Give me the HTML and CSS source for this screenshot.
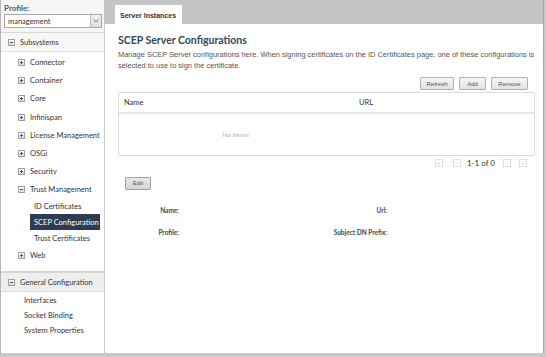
FILE: index.html
```html
<!DOCTYPE html>
<html lang="en">
<head>
  <meta charset="UTF-8">
  <title>SCEP Server Configurations</title>
  <link rel="stylesheet" href="styles.css">
</head>
<body>
  <div class="app">
    <div class="sidebar">
      <div class="profile">
        <div class="profile-label">Profile:</div>
        <div class="select">
          <span>management</span>
          <span class="select-btn">
            <svg width="6" height="4" viewBox="0 0 6 4"><path d="M0.5 0.5 L3 3 L5.5 0.5" fill="none" stroke="#777" stroke-width="1"/></svg>
          </span>
        </div>
      </div>

      <div class="section-head"><span class="icon minus"></span>Subsystems</div>
      <ul class="nav">
        <li><span class="icon"></span>Connector</li>
        <li><span class="icon"></span>Container</li>
        <li><span class="icon"></span>Core</li>
        <li><span class="icon"></span>Infinispan</li>
        <li><span class="icon"></span>License Management</li>
        <li><span class="icon"></span>OSGi</li>
        <li><span class="icon"></span>Security</li>
        <li class="open"><span class="icon minus"></span>Trust Management</li>
        <li class="sub">ID Certificates</li>
        <li class="sub selected">SCEP Configuration</li>
        <li class="sub">Trust Certificates</li>
        <li class="web"><span class="icon"></span>Web</li>
      </ul>

      <div class="section-head general"><span class="icon minus"></span>General Configuration</div>
      <ul class="nav plain">
        <li>Interfaces</li>
        <li>Socket Binding</li>
        <li>System Properties</li>
      </ul>
    </div>

    <div class="main">
      <div class="tabbar">
        <div class="tab">Server Instances</div>
      </div>

      <div class="content">
        <h2>SCEP Server Configurations</h2>
        <p class="desc">Manage SCEP Server configurations here. When signing certificates on the ID Certificates page, one of these configurations is selected to use to sign the certificate.</p>

        <div class="toolbar">
          <button class="btn btn-refresh">Refresh</button>
          <button class="btn btn-add">Add</button>
          <button class="btn btn-remove">Remove</button>
        </div>

        <div class="table">
          <div class="table-head">
            <div class="col-name">Name</div>
            <div class="col-url">URL</div>
          </div>
          <div class="table-body">
            <div class="col-name empty">No items!</div>
          </div>
        </div>

        <div class="pager">
          <span class="pg pg-first">&laquo;</span>
          <span class="pg pg-prev">&lsaquo;</span>
          <span class="pg-text">1-1 of 0</span>
          <span class="pg pg-next">&rsaquo;</span>
          <span class="pg pg-last">&raquo;</span>
        </div>

        <button class="btn edit">Edit</button>

        <div class="details">
          <div class="lbl">Name:</div><div></div>
          <div class="lbl">Url:</div><div></div>
          <div class="lbl">Profile:</div><div></div>
          <div class="lbl">Subject DN Prefix:</div><div></div>
        </div>
      </div>
    </div>
  </div>
</body>
</html>
```

FILE: styles.css
```css
body {
  margin: 0;
  width: 546px;
  height: 357px;
  background-color: #c9c9c9;
  font-family: Lato, 'Liberation Sans', sans-serif;
  overflow: hidden;
}

.app {
  display: flex;
  width: 543px;
  height: 353px;
  background-color: white;
  border-right: 1px solid #a9a9a9;
}

/* サイドバー */
.sidebar {
  width: 103px;
  border-left: 1px solid #b5b5b5;
  border-right: 1px solid #c8c8c8;
  background-color: white;
  display: flex;
  flex-direction: column;
}

.profile {
  padding: 4px 2px 4px 3px;
  background-color: #f6f6f6;
  border-bottom: 1px solid #d8d8d8;
}

.profile-label {
  font-size: 8px;
  font-weight: bold;
  color: #4a5f78;
  line-height: 9px;
}

.select {
  display: flex;
  justify-content: space-between;
  align-items: center;
  height: 12px;
  margin-top: 1px;
  border: 1px solid #a8a8a8;
  background-color: white;
  font-size: 7.5px;
  color: #333;
  padding-left: 3px;
}

.select-btn {
  display: flex;
  align-items: center;
  justify-content: center;
  width: 10px;
  height: 12px;
  border-left: 1px solid #bbb;
  background: linear-gradient(#f4f4f4, #dcdcdc);
}

.section-head {
  display: flex;
  align-items: center;
  height: 18px;
  padding-left: 7px;
  font-size: 7.5px;
  color: #333;
  background-color: #f7f7f7;
  border-bottom: 1px solid #e0e0e0;
  white-space: nowrap;
}

.section-head.general {
  margin-top: 7px;
  border-top: 2px solid #d6d6d6;
  background-color: #eeeeee;
}

.icon {
  display: inline-block;
  flex-shrink: 0;
  width: 5px;
  height: 5px;
  border: 1px solid #a0a0a0;
  background: linear-gradient(#fdfdfd, #d8d8d8);
  margin-right: 5px;
  position: relative;
}

.icon::before {
  content: '';
  position: absolute;
  left: 1px;
  top: 2px;
  width: 3px;
  height: 1px;
  background-color: #555;
}

.icon::after {
  content: '';
  position: absolute;
  left: 2px;
  top: 1px;
  width: 1px;
  height: 3px;
  background-color: #555;
}

.icon.minus::after {
  display: none;
}

.nav {
  list-style: none;
  margin: 0;
  padding: 0;
}

.nav li {
  display: flex;
  align-items: center;
  height: 18.3px;
  padding-left: 17px;
  font-size: 7.5px;
  color: #333;
  white-space: nowrap;
}

.nav li:first-child {
  margin-top: 1px;
}

.nav li.open {
  height: 17px;
}

.nav li.sub {
  height: 16px;
  padding-left: 33px;
}

.nav li.selected {
  margin-left: 29px;
  margin-right: 4px;
  padding-left: 4px;
  background-color: #2d3c52;
  color: white;
}

.nav li.web {
  height: 18px;
}

.nav.plain li {
  height: 15px;
  padding-left: 23px;
}

/* メイン */
.main {
  flex: 1;
  display: flex;
  flex-direction: column;
}

.tabbar {
  height: 24px;
  background-color: #c4c4c4;
  padding-left: 10px;
  box-sizing: border-box;
  padding-top: 2px;
}

.tab {
  display: inline-block;
  height: 22px;
  line-height: 22px;
  padding: 0 6px 0 5px;
  background-color: white;
  font-family: 'Liberation Sans', Arial, sans-serif;
  font-size: 7px;
  font-weight: bold;
  color: #333;
}

.content {
  padding: 0 8px 0 13px;
}

h2 {
  margin: 10px 0 3px 0;
  font-size: 10.5px;
  font-weight: bold;
  color: #34465a;
}

.desc {
  margin: 0;
  font-family: 'Liberation Sans', Arial, sans-serif;
  font-size: 7.45px;
  line-height: 11px;
  color: #555;
}

.toolbar {
  display: flex;
  justify-content: flex-end;
  gap: 5px;
  margin-top: 6px;
  padding-right: 7px;
}

.btn {
  height: 13px;
  padding: 0;
  border: 1px solid #b0b0b0;
  border-radius: 1px;
  background: linear-gradient(#f6f6f6, #e2e2e2);
  font-family: 'Liberation Sans', Arial, sans-serif;
  font-size: 6px;
  color: #555;
}

.btn-refresh {
  width: 34px;
}

.btn-add {
  width: 27px;
}

.btn-remove {
  width: 37px;
}

.table {
  margin-top: 2px;
  border: 1px solid #dcdcdc;
  border-radius: 2px;
  height: 62px;
}

.table-head {
  display: flex;
  height: 19px;
  align-items: center;
  border-bottom: 2px solid #e6e6e6;
  font-size: 7.5px;
  color: #333;
}

.col-name {
  width: 240px;
  padding-left: 5px;
  box-sizing: border-box;
}

.table-body {
  display: flex;
  align-items: center;
  height: 40px;
}

.col-name.empty {
  text-align: center;
  padding-left: 0;
  padding-right: 6px;
  font-size: 6.5px;
  color: #b5b5b5;
}

.pager {
  display: flex;
  justify-content: flex-end;
  align-items: center;
  margin-top: 0;
  padding-right: 8px;
  height: 13px;
}

.pg {
  width: 6px;
  height: 6px;
  border: 1px solid #dedede;
  font-size: 6px;
  line-height: 5px;
  text-align: center;
  color: #c0c0c0;
}

.pg-prev {
  margin-left: 10px;
}

.pg-text {
  font-size: 8px;
  color: #333;
  margin: 0 8px 0 6px;
}

.pg-last {
  margin-left: 8px;
}

.edit {
  width: 26px;
  margin: 1px 0 0 7px;
  background: linear-gradient(#e8e8e8, #d4d4d4);
  border-color: #a0a0a0;
}

.details {
  display: grid;
  grid-template-columns: 61px 100px 108px 1fr;
  row-gap: 13px;
  margin-top: 16px;
  font-size: 6.5px;
  font-weight: bold;
  color: #3b4452;
}

.lbl {
  text-align: right;
  line-height: 9px;
}
```
